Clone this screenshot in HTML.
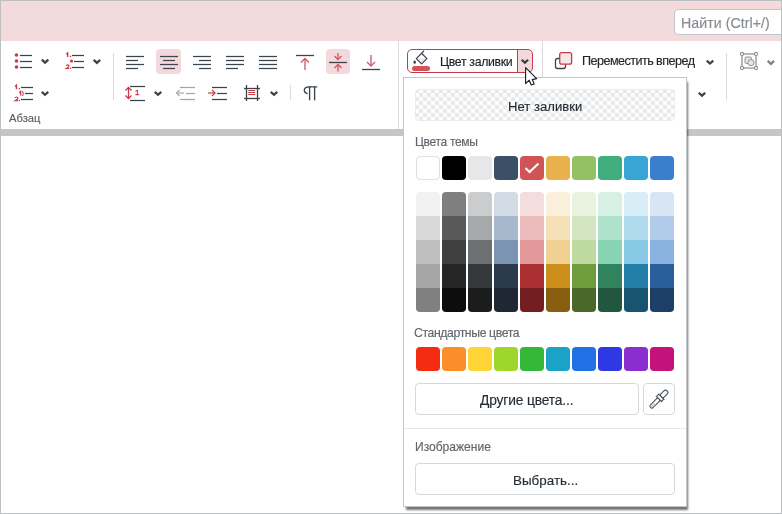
<!DOCTYPE html>
<html><head><meta charset="utf-8"><style>
html,body{margin:0;padding:0;width:782px;height:514px;overflow:hidden;background:#fff}
.t{position:absolute;white-space:nowrap;line-height:1;font-family:"Liberation Sans",sans-serif;will-change:transform;-webkit-text-stroke:0.15px currentColor}
svg{overflow:visible}
</style></head><body>
<div style="position:absolute;left:0px;top:0px;width:782px;height:41px;background:#f2dadd"></div>
<div style="position:absolute;left:0px;top:41px;width:782px;height:88px;background:#fff"></div>
<div style="position:absolute;left:0px;top:129px;width:782px;height:7px;background:#c4c7ca"></div>
<div style="position:absolute;left:0px;top:136px;width:782px;height:378px;background:#fff"></div>
<div style="position:absolute;left:674px;top:9px;width:120px;height:24px;border:1px solid #c2c6ca;border-radius:4px;background:#fff;box-sizing:border-box;height:26px"></div>
<div class="t" style="left:680.7px;top:15.87px;font-size:14.15px;color:#878c91;letter-spacing:0.069px">Найти (Ctrl+/)</div>
<div class="t" style="left:9px;top:112.76px;font-size:11.11px;color:#575d63;letter-spacing:0.075px">Абзац</div>
<div style="position:absolute;left:156px;top:49px;width:25px;height:25px;background:#f4d9dc;border-radius:4px"></div>
<div style="position:absolute;left:326px;top:49px;width:24px;height:25px;background:#f4d9dc;border-radius:4px"></div>
<div class="t" style="left:134.8px;top:89.3px;font-size:8px;font-weight:normal;-webkit-text-stroke:0.35px #c73a48;color:#c73a48">1</div>
<div class="t" style="left:582.4px;top:55.37px;font-size:12.62px;color:#1f252b;letter-spacing:-0.553px">Переместить вперед</div>
<svg style="position:absolute;left:0;top:0" width="782" height="514" viewBox="0 0 782 514"><circle cx="16.5" cy="55" r="1.8" fill="#c73a48"/><line x1="20" y1="55.5" x2="32" y2="55.5" stroke="#3b444d" stroke-width="1.25"/><circle cx="16.5" cy="61" r="1.8" fill="#c73a48"/><line x1="20" y1="61.5" x2="32" y2="61.5" stroke="#3b444d" stroke-width="1.25"/><circle cx="16.5" cy="67" r="1.8" fill="#c73a48"/><line x1="20" y1="67.5" x2="32" y2="67.5" stroke="#3b444d" stroke-width="1.25"/><polyline points="41.8,59.65 45.05,62.6 48.3,59.65" fill="none" stroke="#3b444d" stroke-width="2.3" stroke-linecap="butt" stroke-linejoin="miter"/><path d="M66.19999999999999,54.3 L67.64999999999999,53.05 V57.099999999999994" fill="none" stroke="#c73a48" stroke-width="1.35"/><rect x="69.85" y="55.75" width="1.35" height="1.35" fill="#c73a48"/><path d="M66.3,65.89999999999999 C66.5,65.1 67.1,64.8 67.6,64.8 C68.39999999999999,64.8 69.0,65.3 69.0,66.0 C69.0,66.8 68.1,67.5 66.3,68.5 H69.19999999999999" fill="none" stroke="#c73a48" stroke-width="1.2"/><rect x="69.94999999999999" y="67.55" width="1.35" height="1.35" fill="#c73a48"/><circle cx="71.5" cy="61" r="1.6" fill="#c73a48"/><line x1="72" y1="55.5" x2="84" y2="55.5" stroke="#3b444d" stroke-width="1.25"/><line x1="74" y1="61.5" x2="84" y2="61.5" stroke="#3b444d" stroke-width="1.25"/><line x1="72" y1="67.5" x2="84" y2="67.5" stroke="#3b444d" stroke-width="1.25"/><polyline points="93.65,59.95 96.9,62.900000000000006 100.15,59.95" fill="none" stroke="#3b444d" stroke-width="2.3" stroke-linecap="butt" stroke-linejoin="miter"/><line x1="113.5" y1="53" x2="113.5" y2="100" stroke="#d9dbdd" stroke-width="1"/><path d="M15.0,86.5 L16.45,85.25 V89.3" fill="none" stroke="#c73a48" stroke-width="1.35"/><rect x="18.65" y="87.95" width="1.35" height="1.35" fill="#c73a48"/><path d="M19.200000000000003,92.7 L20.650000000000002,91.45 V95.5" fill="none" stroke="#c73a48" stroke-width="1.35"/><path d="M22.3,91 C23.5,92.2 23.5,94.8 22.3,96" fill="none" stroke="#c73a48" stroke-width="1.05"/><path d="M15.1,98.1 C15.3,97.3 15.9,97.0 16.4,97.0 C17.2,97.0 17.8,97.5 17.8,98.2 C17.8,99.0 16.9,99.7 15.1,100.7 H18.0" fill="none" stroke="#c73a48" stroke-width="1.2"/><rect x="18.75" y="99.75" width="1.35" height="1.35" fill="#c73a48"/><line x1="21" y1="87.5" x2="33" y2="87.5" stroke="#3b444d" stroke-width="1.25"/><line x1="25" y1="93.5" x2="33" y2="93.5" stroke="#3b444d" stroke-width="1.25"/><line x1="21" y1="99.5" x2="33" y2="99.5" stroke="#3b444d" stroke-width="1.25"/><polyline points="41.75,91.85 45,94.8 48.25,91.85" fill="none" stroke="#3b444d" stroke-width="2.3" stroke-linecap="butt" stroke-linejoin="miter"/><line x1="126" y1="56.5" x2="144" y2="56.5" stroke="#3b444d" stroke-width="1.25"/><line x1="160" y1="56.5" x2="178" y2="56.5" stroke="#3b444d" stroke-width="1.25"/><line x1="193" y1="56.5" x2="211" y2="56.5" stroke="#3b444d" stroke-width="1.25"/><line x1="226" y1="56.5" x2="244" y2="56.5" stroke="#3b444d" stroke-width="1.25"/><line x1="259" y1="56.5" x2="277" y2="56.5" stroke="#3b444d" stroke-width="1.25"/><line x1="126" y1="60.5" x2="138" y2="60.5" stroke="#3b444d" stroke-width="1.25"/><line x1="163" y1="60.5" x2="175" y2="60.5" stroke="#3b444d" stroke-width="1.25"/><line x1="199" y1="60.5" x2="211" y2="60.5" stroke="#3b444d" stroke-width="1.25"/><line x1="226" y1="60.5" x2="244" y2="60.5" stroke="#3b444d" stroke-width="1.25"/><line x1="259" y1="60.5" x2="277" y2="60.5" stroke="#3b444d" stroke-width="1.25"/><line x1="126" y1="64.5" x2="144" y2="64.5" stroke="#3b444d" stroke-width="1.25"/><line x1="160" y1="64.5" x2="178" y2="64.5" stroke="#3b444d" stroke-width="1.25"/><line x1="193" y1="64.5" x2="211" y2="64.5" stroke="#3b444d" stroke-width="1.25"/><line x1="226" y1="64.5" x2="244" y2="64.5" stroke="#3b444d" stroke-width="1.25"/><line x1="259" y1="64.5" x2="277" y2="64.5" stroke="#3b444d" stroke-width="1.25"/><line x1="126" y1="68.5" x2="138" y2="68.5" stroke="#3b444d" stroke-width="1.25"/><line x1="163" y1="68.5" x2="175" y2="68.5" stroke="#3b444d" stroke-width="1.25"/><line x1="199" y1="68.5" x2="211" y2="68.5" stroke="#3b444d" stroke-width="1.25"/><line x1="226" y1="68.5" x2="238" y2="68.5" stroke="#3b444d" stroke-width="1.25"/><line x1="259" y1="68.5" x2="277" y2="68.5" stroke="#3b444d" stroke-width="1.25"/><line x1="296" y1="55.5" x2="314" y2="55.5" stroke="#3b444d" stroke-width="1.3"/><line x1="305" y1="58.5" x2="305" y2="70" stroke="#cf5a68" stroke-width="1.35"/><polyline points="301,62.5 305,58.5 309,62.5" fill="none" stroke="#cf5a68" stroke-width="1.35"/><line x1="329" y1="62.5" x2="347" y2="62.5" stroke="#3b444d" stroke-width="1.3"/><line x1="338" y1="53" x2="338" y2="59.5" stroke="#cf5a68" stroke-width="1.35"/><polyline points="334.5,56 338,59.5 341.5,56" fill="none" stroke="#cf5a68" stroke-width="1.35"/><line x1="338" y1="64.5" x2="338" y2="71.5" stroke="#cf5a68" stroke-width="1.35"/><polyline points="334.5,68 338,64.5 341.5,68" fill="none" stroke="#cf5a68" stroke-width="1.35"/><line x1="362" y1="69.5" x2="380" y2="69.5" stroke="#3b444d" stroke-width="1.3"/><line x1="371" y1="55" x2="371" y2="66" stroke="#cf5a68" stroke-width="1.35"/><polyline points="367,62 371,66 375,62" fill="none" stroke="#cf5a68" stroke-width="1.35"/><line x1="398.5" y1="41" x2="398.5" y2="129" stroke="#d9dbdd" stroke-width="1"/><line x1="130" y1="86.5" x2="145" y2="86.5" stroke="#3b444d" stroke-width="1.25"/><line x1="130" y1="100.5" x2="145" y2="100.5" stroke="#3b444d" stroke-width="1.25"/><line x1="128.5" y1="88" x2="128.5" y2="98" stroke="#c73a48" stroke-width="1.3"/><polyline points="125.5,90.5 128.5,87.5 131.5,90.5" fill="none" stroke="#c73a48" stroke-width="1.3"/><polyline points="125.5,95.5 128.5,98.5 131.5,95.5" fill="none" stroke="#c73a48" stroke-width="1.3"/><polyline points="154.75,91.85 158,94.8 161.25,91.85" fill="none" stroke="#3b444d" stroke-width="2.3" stroke-linecap="butt" stroke-linejoin="miter"/><line x1="180" y1="87.5" x2="195" y2="87.5" stroke="#a3a6a9" stroke-width="1.25"/><line x1="186" y1="93.5" x2="195" y2="93.5" stroke="#a3a6a9" stroke-width="1.25"/><line x1="180" y1="99.5" x2="195" y2="99.5" stroke="#a3a6a9" stroke-width="1.25"/><line x1="176.5" y1="93" x2="184" y2="93" stroke="#a3a6a9" stroke-width="1.15"/><polyline points="179.5,90 176.5,93 179.5,96" fill="none" stroke="#a3a6a9" stroke-width="1.15"/><line x1="212" y1="87.5" x2="227" y2="87.5" stroke="#3b444d" stroke-width="1.25"/><line x1="217" y1="93.5" x2="227" y2="93.5" stroke="#3b444d" stroke-width="1.25"/><line x1="212" y1="99.5" x2="227" y2="99.5" stroke="#3b444d" stroke-width="1.25"/><line x1="208" y1="93" x2="215" y2="93" stroke="#c73a48" stroke-width="1.2"/><polyline points="212,90 215,93 212,96" fill="none" stroke="#c73a48" stroke-width="1.2"/><line x1="244" y1="88.5" x2="260" y2="88.5" stroke="#3b444d" stroke-width="1.3"/><line x1="244" y1="98.5" x2="260" y2="98.5" stroke="#3b444d" stroke-width="1.3"/><line x1="246.5" y1="85" x2="246.5" y2="101" stroke="#3b444d" stroke-width="1.3"/><line x1="257.5" y1="85" x2="257.5" y2="101" stroke="#3b444d" stroke-width="1.3"/><line x1="248.3" y1="90.5" x2="255.2" y2="90.5" stroke="#c73a48" stroke-width="1"/><line x1="248.3" y1="92.5" x2="255.2" y2="92.5" stroke="#c73a48" stroke-width="1"/><line x1="248.3" y1="94.5" x2="255.2" y2="94.5" stroke="#c73a48" stroke-width="1"/><polyline points="270.75,91.85 274,94.8 277.25,91.85" fill="none" stroke="#3b444d" stroke-width="2.3" stroke-linecap="butt" stroke-linejoin="miter"/><line x1="290.5" y1="85" x2="290.5" y2="100" stroke="#d9dbdd" stroke-width="1"/><path d="M317.3,86.9 H309.5 C306.2,86.9 304.3,88.6 304.3,90.3 C304.3,92.1 305.7,93.3 307.6,93.6" fill="none" stroke="#3b444d" stroke-width="1.3"/><line x1="309.6" y1="86.3" x2="309.6" y2="100.3" stroke="#3b444d" stroke-width="1.35"/><line x1="314.6" y1="86.3" x2="314.6" y2="100.3" stroke="#3b444d" stroke-width="1.35"/><line x1="542.5" y1="41" x2="542.5" y2="129" stroke="#d9dbdd" stroke-width="1"/><rect x="555.5" y="58.5" width="10" height="10" rx="2" fill="#fff" stroke="#3b444d" stroke-width="1.3"/><rect x="559.7" y="52.7" width="11.9" height="11.5" rx="2" fill="#f7e6e8" stroke="#c73a48" stroke-width="1.3"/><polyline points="706.75,60.55 710,63.5 713.25,60.55" fill="none" stroke="#3b444d" stroke-width="2.3" stroke-linecap="butt" stroke-linejoin="miter"/><polyline points="698.75,92.75 702,95.7 705.25,92.75" fill="none" stroke="#3b444d" stroke-width="2.3" stroke-linecap="butt" stroke-linejoin="miter"/><line x1="726.5" y1="53" x2="726.5" y2="100.5" stroke="#d9dbdd" stroke-width="1"/><rect x="742" y="54" width="14" height="14" fill="none" stroke="#8f9397" stroke-width="1.3"/><rect x="745" y="57" width="6.5" height="6.5" rx="1.2" fill="#e4e5e6" stroke="#8f9397" stroke-width="1"/><circle cx="751" cy="62.6" r="3.1" fill="#e4e5e6" stroke="#8f9397" stroke-width="1"/><circle cx="742" cy="54" r="1.6" fill="#fff" stroke="#8f9397" stroke-width="1.1"/><circle cx="756" cy="54" r="1.6" fill="#fff" stroke="#8f9397" stroke-width="1.1"/><circle cx="742" cy="68" r="1.6" fill="#fff" stroke="#8f9397" stroke-width="1.1"/><circle cx="756" cy="68" r="1.6" fill="#fff" stroke="#8f9397" stroke-width="1.1"/><polyline points="767.65,60.95 770.9,63.900000000000006 774.15,60.95" fill="none" stroke="#7f8489" stroke-width="2.3" stroke-linecap="butt" stroke-linejoin="miter"/></svg>
<div style="position:absolute;left:407px;top:49px;width:126px;height:24px;border:1px solid #c73a48;border-radius:5px;box-sizing:border-box;background:linear-gradient(to right,#fff 109px,#c73a48 109px,#c73a48 110px,#f4d9dc 110px)"></div>
<div class="t" style="left:439.5px;top:55.85px;font-size:12.29px;color:#1a2026;letter-spacing:-0.318px">Цвет заливки</div>
<svg style="position:absolute;left:0;top:0" width="782" height="514" viewBox="0 0 782 514"><path d="M417.6,58.6 L425.6,58.6 L421.6,62.6 Z" fill="#f6e1e4"/><path d="M423.6,51.2 L416.3,58.6 L421.6,63.9 L426.9,58.6 L422.3,54" fill="none" stroke="#3b444d" stroke-width="1.25" stroke-linejoin="round" stroke-linecap="round"/><path d="M414.7,60.1 C415.3,61 416.1,61.8 416.1,62.6 C416.1,63.3 415.5,63.8 414.7,63.8 C413.9,63.8 413.3,63.3 413.3,62.6 C413.3,61.8 414.1,61 414.7,60.1 Z" fill="#3b444d"/><rect x="412" y="66" width="18" height="5" rx="2.5" fill="#d65257"/><polyline points="521.65,59.75 524.9,62.7 528.15,59.75" fill="none" stroke="#3b444d" stroke-width="2.3" stroke-linecap="butt" stroke-linejoin="miter"/></svg>
<div id="panel" style="position:absolute;left:403px;top:77px;width:284px;height:430px;box-sizing:border-box;border:1px solid #c4c7ca;background:#fff;box-shadow:2px 4px 2px -1px rgba(0,0,0,0.55)"></div>
<div style="position:absolute;left:415px;top:89px;width:260px;height:32px;box-sizing:border-box;border:1px solid #e9ebed;border-radius:4px;background:repeating-conic-gradient(#fff 0% 25%, #e7e9eb 0% 50%) -1px -1px/8px 8px"></div>
<div class="t" style="left:507.8px;top:99.78px;font-size:13.08px;color:#262d34;letter-spacing:0.02px">Нет заливки</div>
<div class="t" style="left:415px;top:135.96px;font-size:12.05px;color:#60666c;letter-spacing:-0.333px">Цвета темы</div>
<div style="position:absolute;left:416px;top:156px;width:24px;height:24px;background:#ffffff;border-radius:4px;border:1px solid #dcdee0;box-sizing:border-box"></div>
<div style="position:absolute;left:442px;top:156px;width:24px;height:24px;background:#000000;border-radius:4px"></div>
<div style="position:absolute;left:468px;top:156px;width:24px;height:24px;background:#e5e7e9;border-radius:4px"></div>
<div style="position:absolute;left:494px;top:156px;width:24px;height:24px;background:#3b4f66;border-radius:4px"></div>
<div style="position:absolute;left:520px;top:156px;width:24px;height:24px;background:#d05456;border-radius:4px"></div>
<div style="position:absolute;left:546px;top:156px;width:24px;height:24px;background:#e8b14b;border-radius:4px"></div>
<div style="position:absolute;left:572px;top:156px;width:24px;height:24px;background:#93c163;border-radius:4px"></div>
<div style="position:absolute;left:598px;top:156px;width:24px;height:24px;background:#40ae7c;border-radius:4px"></div>
<div style="position:absolute;left:624px;top:156px;width:24px;height:24px;background:#39a5d6;border-radius:4px"></div>
<div style="position:absolute;left:650px;top:156px;width:24px;height:24px;background:#3a7fcb;border-radius:4px"></div>
<div style="position:absolute;left:416px;top:192px;width:24px;height:120px;border-radius:4px;overflow:hidden"><div style="height:24px;background:#f2f2f2"></div><div style="height:24px;background:#d9d9d9"></div><div style="height:24px;background:#bfbfbf"></div><div style="height:24px;background:#a6a6a6"></div><div style="height:24px;background:#808080"></div></div>
<div style="position:absolute;left:442px;top:192px;width:24px;height:120px;border-radius:4px;overflow:hidden"><div style="height:24px;background:#7f7f7f"></div><div style="height:24px;background:#595959"></div><div style="height:24px;background:#3f3f3f"></div><div style="height:24px;background:#262626"></div><div style="height:24px;background:#0d0d0d"></div></div>
<div style="position:absolute;left:468px;top:192px;width:24px;height:120px;border-radius:4px;overflow:hidden"><div style="height:24px;background:#cbcccd"></div><div style="height:24px;background:#a6a9ab"></div><div style="height:24px;background:#6c7073"></div><div style="height:24px;background:#35393c"></div><div style="height:24px;background:#1a1c1e"></div></div>
<div style="position:absolute;left:494px;top:192px;width:24px;height:120px;border-radius:4px;overflow:hidden"><div style="height:24px;background:#d3dbe5"></div><div style="height:24px;background:#a7b8cc"></div><div style="height:24px;background:#7a94b2"></div><div style="height:24px;background:#2c3b4c"></div><div style="height:24px;background:#1e2733"></div></div>
<div style="position:absolute;left:520px;top:192px;width:24px;height:120px;border-radius:4px;overflow:hidden"><div style="height:24px;background:#f6dddd"></div><div style="height:24px;background:#ecbbbb"></div><div style="height:24px;background:#e3989a"></div><div style="height:24px;background:#ac2f31"></div><div style="height:24px;background:#731f21"></div></div>
<div style="position:absolute;left:546px;top:192px;width:24px;height:120px;border-radius:4px;overflow:hidden"><div style="height:24px;background:#faefdb"></div><div style="height:24px;background:#f6e0b7"></div><div style="height:24px;background:#f1d093"></div><div style="height:24px;background:#cc8e1a"></div><div style="height:24px;background:#885f11"></div></div>
<div style="position:absolute;left:572px;top:192px;width:24px;height:120px;border-radius:4px;overflow:hidden"><div style="height:24px;background:#e9f3e0"></div><div style="height:24px;background:#d4e6c1"></div><div style="height:24px;background:#bedaa1"></div><div style="height:24px;background:#6f9d3e"></div><div style="height:24px;background:#4a682a"></div></div>
<div style="position:absolute;left:598px;top:192px;width:24px;height:120px;border-radius:4px;overflow:hidden"><div style="height:24px;background:#d7f0e5"></div><div style="height:24px;background:#afe2cb"></div><div style="height:24px;background:#88d3b1"></div><div style="height:24px;background:#30835d"></div><div style="height:24px;background:#20573e"></div></div>
<div style="position:absolute;left:624px;top:192px;width:24px;height:120px;border-radius:4px;overflow:hidden"><div style="height:24px;background:#d7edf7"></div><div style="height:24px;background:#b0dbef"></div><div style="height:24px;background:#88c9e6"></div><div style="height:24px;background:#237fa8"></div><div style="height:24px;background:#175470"></div></div>
<div style="position:absolute;left:650px;top:192px;width:24px;height:120px;border-radius:4px;overflow:hidden"><div style="height:24px;background:#d8e5f5"></div><div style="height:24px;background:#b0ccea"></div><div style="height:24px;background:#89b2e0"></div><div style="height:24px;background:#295f9b"></div><div style="height:24px;background:#1b3f67"></div></div>
<div class="t" style="left:414px;top:326.98px;font-size:12.26px;color:#60666c;letter-spacing:-0.394px">Стандартные цвета</div>
<div style="position:absolute;left:416px;top:347px;width:24px;height:24px;background:#f52b12;border-radius:4px"></div>
<div style="position:absolute;left:442px;top:347px;width:24px;height:24px;background:#fc8e29;border-radius:4px"></div>
<div style="position:absolute;left:468px;top:347px;width:24px;height:24px;background:#fed535;border-radius:4px"></div>
<div style="position:absolute;left:494px;top:347px;width:24px;height:24px;background:#9fd62b;border-radius:4px"></div>
<div style="position:absolute;left:520px;top:347px;width:24px;height:24px;background:#35b838;border-radius:4px"></div>
<div style="position:absolute;left:546px;top:347px;width:24px;height:24px;background:#1aa3c6;border-radius:4px"></div>
<div style="position:absolute;left:572px;top:347px;width:24px;height:24px;background:#2270e5;border-radius:4px"></div>
<div style="position:absolute;left:598px;top:347px;width:24px;height:24px;background:#2e39e5;border-radius:4px"></div>
<div style="position:absolute;left:624px;top:347px;width:24px;height:24px;background:#8a2ed0;border-radius:4px"></div>
<div style="position:absolute;left:650px;top:347px;width:24px;height:24px;background:#c3137a;border-radius:4px"></div>
<div style="position:absolute;left:415px;top:383px;width:224px;height:32px;box-sizing:border-box;border:1px solid #d6d9dc;border-radius:4px;background:#fff"></div>
<div class="t" style="left:480px;top:393.58px;font-size:13.79px;color:#262d34;letter-spacing:-0.143px">Другие цвета...</div>
<div style="position:absolute;left:643px;top:383px;width:32px;height:32px;box-sizing:border-box;border:1px solid #d6d9dc;border-radius:4px;background:#fff"></div>
<div style="position:absolute;left:404px;top:428px;width:282px;height:1px;background:#e6e8ea"></div>
<div class="t" style="left:414.75px;top:440.54px;font-size:12.07px;color:#60666c;letter-spacing:-0.015px">Изображение</div>
<div style="position:absolute;left:415px;top:463px;width:260px;height:32px;box-sizing:border-box;border:1px solid #d6d9dc;border-radius:4px;background:#fff"></div>
<div class="t" style="left:513.2px;top:473.60px;font-size:13.41px;color:#262d34;letter-spacing:0.011px">Выбрать...</div>
<svg style="position:absolute;left:0;top:0" width="782" height="514" viewBox="0 0 782 514"><polyline points="525.5,168 529.5,172 538.5,163.5" fill="none" stroke="#fff" stroke-width="2"/><g transform="translate(659,399) rotate(-45)"><rect x="-12" y="-1.9" width="12.5" height="3.8" rx="1.9" fill="#fff" stroke="#4a525a" stroke-width="1.1"/><rect x="-11.4" y="-1.35" width="5.5" height="2.7" rx="1.35" fill="#f2c9cd"/><rect x="3" y="-2.3" width="8.5" height="4.6" rx="2.3" fill="#fff" stroke="#4a525a" stroke-width="1.1"/><path d="M0,-3.9 Q1.6,-2.6 3.2,-3.9 L3.2,3.9 Q1.6,2.6 0,3.9 Z" fill="#fff" stroke="#4a525a" stroke-width="1.1" stroke-linejoin="round"/></g></svg>
<svg style="position:absolute;left:0;top:0" width="782" height="514" viewBox="0 0 782 514"><polygon points="525.6,67.6 525.6,83.6 529.2,80.2 531.3,85 534.2,84 532.3,79.6 536.6,78.6" fill="#fff" stroke="#1a1f2b" stroke-width="1.15" stroke-linejoin="round"/></svg>
<div style="position:absolute;left:0px;top:0px;width:780px;height:512px;border:1px solid #bdbfc0"></div>
</body></html>
